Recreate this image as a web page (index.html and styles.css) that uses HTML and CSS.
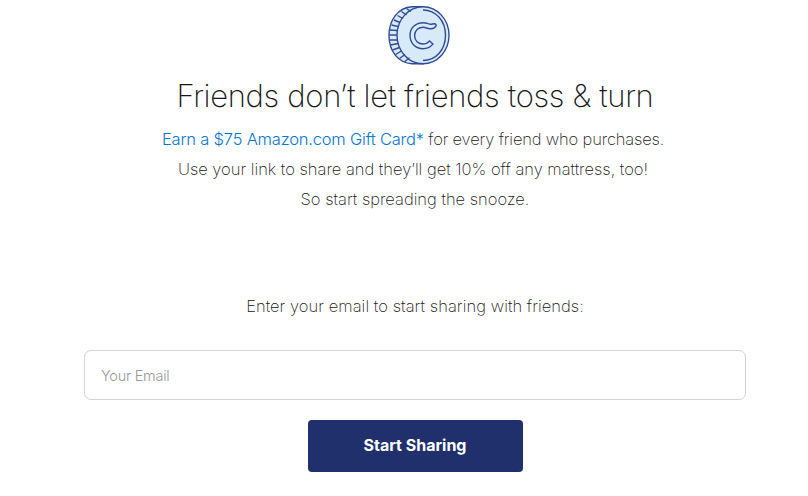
FILE: index.html
```html
<!DOCTYPE html>
<html lang="en">
<head>
<meta charset="UTF-8">
<title>Refer a Friend</title>
<meta name="viewport" content="width=device-width, initial-scale=1">
<link rel="stylesheet" href="styles.css">
</head>
<body>

<main class="referral">
  <svg class="coin" width="64" height="62" viewBox="0 0 64 62" fill="none" stroke="#2f4d97" stroke-width="1.4">
    <path d="M36 1.700H25C11 2.500 2 15 2 30.500S11 58 25 58.800h11z" fill="#d8e9f8"/>
    <ellipse cx="36" cy="30.300" rx="26" ry="28.500" fill="#d8e9f8"/>
    <path d="M36 5C49 5 58.500 16 58.500 30.300S49 55.500 36 55.500"/>
    <path d="M19.500 3.500l4.500 3M14.500 6.500l5 3.500M10.500 10.500l5.500 3M7 15l6 2.500M4.500 20l6.500 1.500M3 25l7 .5M2 30h8M2.500 35h8M3.500 40l7.500-1.500M5.500 45l7-2.500M8.500 49.500l6-3.500M12.500 53.500l5.500-4M17.500 56.800l5-4"/>
    <path d="M47.300 18.700c1.600 0 2.300 1.400 1.600 2.500-1.400 2.400-4.300 2.800-6.600 2.500-2.200-.3-3.800-1.400-6-1.400-5 0-8.700 3.300-8.700 8.300s3.500 8.400 8.700 8.400c2.800 0 4.600-1.300 6.300-3.100l3.300 3.200c-2.600 3-5.600 4.600-9.800 4.600-7.600 0-13.100-5.500-13.100-13.100s5.500-12.900 13.100-12.900c3.800 0 5.500 1.600 7.600 1.600 1.300 0 2.300-.6 3.600-.6z"/>
  </svg>
  <h1>Friends don’t let friends toss &amp; turn</h1>
  <div class="intro">
    <p class="offer"><a href="#">Earn a $75 Amazon.com Gift Card*</a> for every friend who purchases.</p>
    <p class="share">Use your link to share and they’ll get 10% off any mattress, too!</p>
    <p class="snooze">So start spreading the snooze.</p>
  </div>
  <form class="email-form">
    <label for="email">Enter your email to start sharing with friends:</label>
    <input type="email" id="email" placeholder="Your Email">
    <button type="button">Start Sharing</button>
  </form>
</main>

</body>
</html>
```
FILE: styles.css
```css
body { font-family: Inter, "Liberation Sans", sans-serif; font-weight: 250; background: #fff; color: #161616; margin: 0; }
.referral { display: flex; flex-direction: column; align-items: center; width: 662px; margin-left: 84px; padding-top: 5px; }
.coin { display: block; margin-left: 8px; }
h1 { font-size: 31px; font-weight: 200; line-height: 40px; letter-spacing: -0.33px; margin: 9px 0 8px; white-space: nowrap; }
.intro { font-size: 16.5px; line-height: 30px; text-align: center; white-space: nowrap; margin-right: 4px; }
.intro p { margin: 0; }
.intro .offer { letter-spacing: -0.16px; }
.intro .snooze { padding-left: 4px; }
.intro a { color: #0576d8; font-weight: 300; letter-spacing: -0.2px; text-decoration: none; }
.email-form { display: flex; flex-direction: column; align-items: center; width: 100%; margin-top: 77px; }
label { font-size: 16.5px; line-height: 30px; letter-spacing: 0.06px; white-space: nowrap; }
input { box-sizing: border-box; width: 100%; height: 50px; margin: 29px 0 20px; padding: 0 16px; border: 1px solid #d3d3d3; border-radius: 7px; font: 300 14.5px Inter, sans-serif; letter-spacing: -0.25px; }
input::placeholder { color: #999; opacity: 1; }
button { width: 215px; height: 52px; padding: 0 0 2px; background: #1f306d; color: #fff; border: none; border-radius: 4px; font: 700 16px Inter, sans-serif; cursor: pointer; }
```
